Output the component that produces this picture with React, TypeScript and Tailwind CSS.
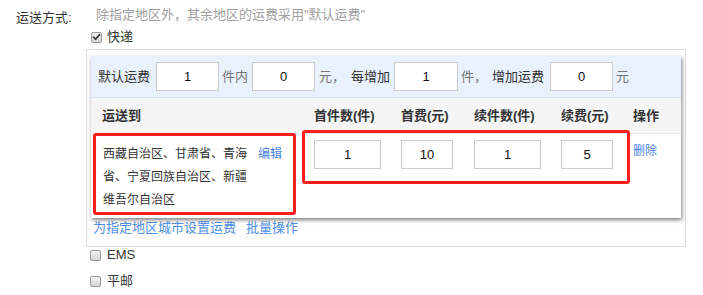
import React from 'react'

const FONT = { fontFamily: '"Liberation Sans", Arial, "Noto Sans CJK SC", sans-serif' }

function Box({ checked }: { checked?: boolean }) {
  return (
    <span className="flex h-[11px] w-[11px] items-center justify-center rounded-[2px] border border-[#9a9a9a] bg-gradient-to-b from-[#f4f4f4] to-[#d6d6d6]">
      {checked && (
        <svg viewBox="0 0 12 12" className="h-[10px] w-[10px]">
          <path d="M2 6.2 L4.8 9 L10 2.8" fill="none" stroke="#333" strokeWidth="2.2" strokeLinecap="round" strokeLinejoin="round" />
        </svg>
      )}
    </span>
  )
}

function Field({ value, w }: { value: string; w: string }) {
  return (
    <span className={`flex h-[29px] items-center justify-center border border-[#cccccc] bg-white text-[13px] text-[#111] ${w}`}>
      {value}
    </span>
  )
}

export default function App() {
  return (
    <div className="h-[295px] w-[703px] overflow-hidden bg-white text-[13px] text-[#333]" style={FONT}>
      <div className="flex">
        <div className="w-[86px] pl-[16px] pt-[8px] leading-[20px]">运送方式:</div>
        <div className="flex flex-col">
          <div className="pl-[10px] pt-[5px] leading-[20px] text-[#a0a0a0]">除指定地区外，其余地区的运费采用"默认运费"</div>
          <div className="flex h-[22px] items-center gap-[5px] pl-[5px] pt-[2px]">
            <Box checked />
            <span>快递</span>
          </div>

          <div className="mt-[2px] w-[600px] border border-[#dddddd] px-[4px] pb-[8px] pt-[6px]">
            <div className="relative bg-white shadow-[1px_2px_4px_rgba(0,0,0,0.5)]">
              <div className="flex h-[42px] items-center border-b border-[#dfe5ec] bg-[#e8f1fc] pl-[7px]">
                <span>默认运费</span>
                <span className="ml-[6px]"><Field value="1" w="w-[63px]" /></span>
                <span className="ml-[3px] text-[#777]">件内</span>
                <span className="ml-[4px]"><Field value="0" w="w-[63px]" /></span>
                <span className="ml-[4px] text-[#777]">元，</span>
                <span className="ml-[6px]">每增加</span>
                <span className="ml-[4px]"><Field value="1" w="w-[64px]" /></span>
                <span className="ml-[3px] text-[#777]">件，</span>
                <span className="ml-[5px]">增加运费</span>
                <span className="ml-[6px]"><Field value="0" w="w-[63px]" /></span>
                <span className="ml-[3px] text-[#777]">元</span>
              </div>

              <div className="grid h-[36px] grid-cols-[214px_87px_73px_87px_72px_1fr] items-center border-b border-[#eaeaea] bg-[#f5f5f5] font-bold">
                <span className="pl-[11px]">运送到</span>
                <span className="pl-[9px]">首件数(件)</span>
                <span className="pl-[9px]">首费(元)</span>
                <span className="pl-[9px]">续件数(件)</span>
                <span className="pl-[9px]">续费(元)</span>
                <span className="pl-[9px]">操作</span>
              </div>

              <div className="grid h-[84px] grid-cols-[214px_87px_73px_87px_72px_1fr] items-start">
                <div className="flex pl-[12px] pt-[9px] text-[12px] leading-[23px]">
                  <div className="w-[150px]">
                    <div>西藏自治区、甘肃省、青海</div>
                    <div>省、宁夏回族自治区、新疆</div>
                    <div>维吾尔自治区</div>
                  </div>
                  <span className="ml-[5px] text-[#4a82e0]">编辑</span>
                </div>
                <div className="pl-[9px] pt-[6px]"><Field value="1" w="w-[67px]" /></div>
                <div className="pl-[9px] pt-[6px]"><Field value="10" w="w-[52px]" /></div>
                <div className="pl-[9px] pt-[6px]"><Field value="1" w="w-[67px]" /></div>
                <div className="pl-[9px] pt-[6px]"><Field value="5" w="w-[52px]" /></div>
                <div className="pl-[9px] pt-[7px] text-[12px] leading-[20px] text-[#4a82e0]">删除</div>
              </div>

              <div className="absolute left-[2px] top-[77px] h-[82px] w-[203px] rounded-[3px] border-[3px] border-[#ff1e1e]" />
              <div className="absolute left-[211px] top-[74px] h-[54px] w-[328px] rounded-[3px] border-[3px] border-[#ff1e1e]" />
            </div>
            <div className="flex h-[20px] items-center gap-[10px] pl-[2px] text-[#4d8fe6]">
              <span>为指定地区城市设置运费</span>
              <span>批量操作</span>
            </div>
          </div>

          <div className="mt-0 flex h-[16px] items-center gap-[6px] pl-[4px]">
            <Box />
            <span>EMS</span>
          </div>
          <div className="mt-[10px] flex h-[16px] items-center gap-[6px] pl-[4px]">
            <Box />
            <span>平邮</span>
          </div>
        </div>
      </div>
    </div>
  )
}
